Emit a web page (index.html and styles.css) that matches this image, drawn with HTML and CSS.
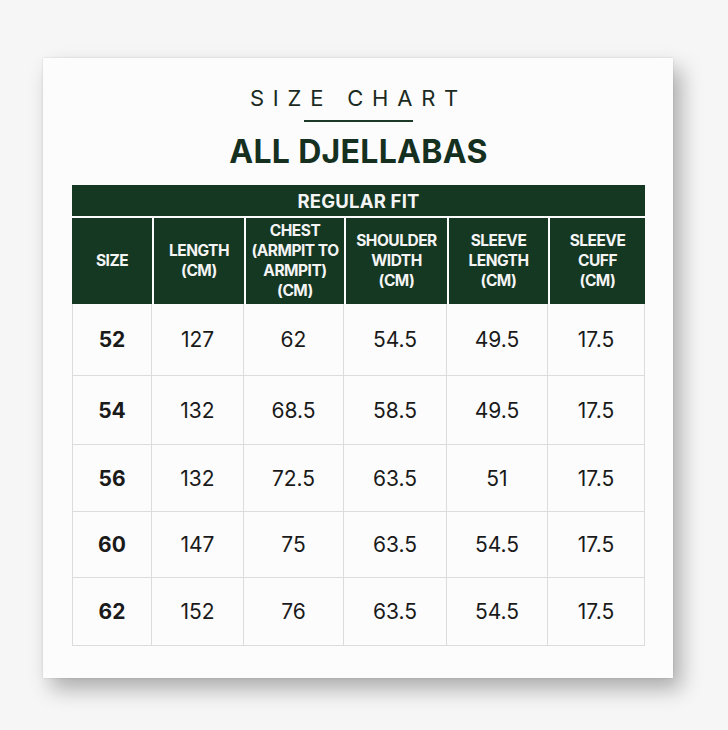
FILE: index.html
```html
<!DOCTYPE html>
<html lang="en">
<head>
<meta charset="utf-8">
<title>Size Chart – All Djellabas</title>
<link rel="stylesheet" href="styles.css">
</head>
<body>
<div class="page">
  <div class="card">
    <div class="eyebrow">SIZE CHART</div>
    <div class="rule"></div>
    <h1 class="title">ALL DJELLABAS</h1>
    <div class="chart">
      <div class="band">REGULAR FIT</div>
      <div class="head">
        <div class="hcell">SIZE</div>
        <div class="hcell">LENGTH<br>(CM)</div>
        <div class="hcell">CHEST<br>(ARMPIT TO<br>ARMPIT)<br>(CM)</div>
        <div class="hcell">SHOULDER<br>WIDTH<br>(CM)</div>
        <div class="hcell">SLEEVE<br>LENGTH<br>(CM)</div>
        <div class="hcell">SLEEVE<br>CUFF<br>(CM)</div>
      </div>
      <div class="body">
        <div class="cell size">52</div><div class="cell">127</div><div class="cell">62</div><div class="cell">54.5</div><div class="cell">49.5</div><div class="cell">17.5</div>
        <div class="cell size">54</div><div class="cell">132</div><div class="cell">68.5</div><div class="cell">58.5</div><div class="cell">49.5</div><div class="cell">17.5</div>
        <div class="cell size">56</div><div class="cell">132</div><div class="cell">72.5</div><div class="cell">63.5</div><div class="cell">51</div><div class="cell">17.5</div>
        <div class="cell size">60</div><div class="cell">147</div><div class="cell">75</div><div class="cell">63.5</div><div class="cell">54.5</div><div class="cell">17.5</div>
        <div class="cell size">62</div><div class="cell">152</div><div class="cell">76</div><div class="cell">63.5</div><div class="cell">54.5</div><div class="cell">17.5</div>
      </div>
    </div>
  </div>
</div>
</body>
</html>
```
FILE: styles.css
```css
* { box-sizing: border-box; }

html, body {
  margin: 0;
  padding: 0;
  background: #f6f6f6;
  font-family: "Inter", "Liberation Sans", sans-serif;
}

.page {
  width: 728px;
  height: 730px;
  padding: 58px 0 0 43px;
}

.card {
  width: 630px;
  height: 620px;
  background: #fcfcfc;
  padding: 29px 28px 0 29px;
  display: flex;
  flex-direction: column;
  align-items: center;
  box-shadow: 8px 11px 20px rgba(0, 0, 0, 0.30), 0 0 2px rgba(0, 0, 0, 0.12);
}

.eyebrow {
  font-size: 22px;
  line-height: 22px;
  font-weight: 400;
  letter-spacing: 8.8px;
  color: #1b2a21;
}

.rule {
  width: 109px;
  height: 2px;
  background: #1d3a28;
  margin-top: 11px;
}

.title {
  margin: 14px 0 0;
  font-size: 32px;
  line-height: 32px;
  font-weight: 700;
  color: #15301f;
  letter-spacing: 0.3px;
}

.chart {
  width: 573px;
  margin-top: 17px;
}

.band {
  height: 31px;
  background: #153823;
  color: #f4f4f4;
  font-size: 18.5px;
  font-weight: 700;
  letter-spacing: 0.2px;
  display: flex;
  align-items: center;
  justify-content: center;
  margin-bottom: 2px;
}

.head {
  display: grid;
  grid-template-columns: 80px 90px 98px 101px 99px 95px;
  column-gap: 2px;
  height: 86px;
}

.hcell {
  background: #153823;
  color: #f4f4f4;
  font-size: 15.5px;
  line-height: 20px;
  font-weight: 700;
  letter-spacing: -0.5px;
  text-align: center;
  display: flex;
  align-items: center;
  justify-content: center;
}

.body {
  display: grid;
  grid-template-columns: 80px 92px 100px 103px 101px 97px;
  grid-template-rows: 72px 69px 67px 66px 68px;
}

.cell {
  border-right: 1px solid #dcdcdc;
  border-bottom: 1px solid #dcdcdc;
  display: flex;
  align-items: center;
  justify-content: center;
  font-size: 21px;
  font-weight: 400;
  color: #1a1a1a;
}

.cell.size {
  border-left: 1px solid #dcdcdc;
  font-weight: 700;
}
```
